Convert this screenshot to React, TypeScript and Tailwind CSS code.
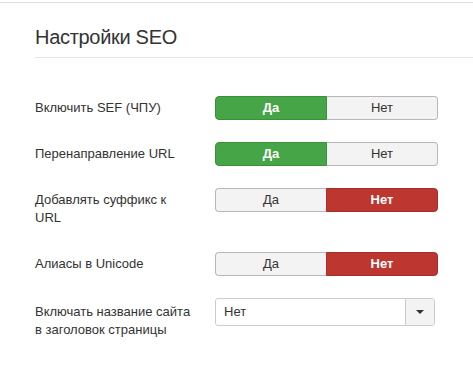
import React from 'react';

type Row = {
  label: string;
  value: 'yes' | 'no';
};

const rows: Row[] = [
  { label: 'Включить SEF (ЧПУ)', value: 'yes' },
  { label: 'Перенаправление URL', value: 'yes' },
  { label: 'Добавлять суффикс к URL', value: 'no' },
  { label: 'Алиасы в Unicode', value: 'no' },
];

const Toggle: React.FC<{ value: 'yes' | 'no' }> = ({ value }) => {
  const yes = value === 'yes';
  return (
    <div className="flex w-[223px] h-[24px] text-[13px] leading-[22px]">
      <div
        className={
          yes
            ? 'flex-1 text-center rounded-l-[4px] border border-[#3c8f3c] bg-[#46a546] text-white font-bold'
            : 'flex-1 text-center rounded-l-[4px] border border-[#b8b8b8] border-r-0 bg-[#f3f3f3] text-[#333]'
        }
      >
        Да
      </div>
      <div
        className={
          yes
            ? 'flex-1 text-center rounded-r-[4px] border border-[#b8b8b8] border-l-0 bg-[#f3f3f3] text-[#333]'
            : 'flex-1 text-center rounded-r-[4px] border border-[#a52f29] bg-[#bd362f] text-white font-bold'
        }
      >
        Нет
      </div>
    </div>
  );
};

const App: React.FC = () => {
  return (
    <div
      className="min-h-[369px] bg-white mt-[2px] border-t border-[#dddddd] text-[#333]"
      style={{ fontFamily: '"Liberation Sans", Arial, sans-serif' }}
    >
      <div className="pl-[35px] pt-[14px]">
        <h2 className="text-[20px] tracking-[-0.3px] leading-[40px] border-b border-[#e5e5e5] font-normal">
          Настройки SEO
        </h2>
        <div className="mt-[38px] flex flex-col gap-[22px]">
          {rows.map((r) => (
            <div key={r.label} className="flex items-start">
              <div className="w-[180px] pr-[20px] py-[3px] text-[13px] leading-[18px]">
                {r.label}
              </div>
              <Toggle value={r.value} />
            </div>
          ))}
          <div className="flex items-start">
            <div className="w-[180px] pr-[20px] pt-[5px] text-[13px] leading-[18px]">
              Включать название сайта в заголовок страницы
            </div>
            <div className="flex w-[220px] h-[28px] rounded-[3px] border border-[#cccccc] text-[13px] leading-[26px] overflow-hidden">
              <div className="flex-1 pl-[8px]">Нет</div>
              <div className="w-[29px] border-l border-[#cccccc] bg-[#f3f3f3] flex items-center justify-center">
                <svg width="8" height="5" viewBox="0 0 8 5">
                  <path d="M0 0 H8 L4 4 Z" fill="#333" />
                </svg>
              </div>
            </div>
          </div>
        </div>
      </div>
    </div>
  );
};

export default App;
